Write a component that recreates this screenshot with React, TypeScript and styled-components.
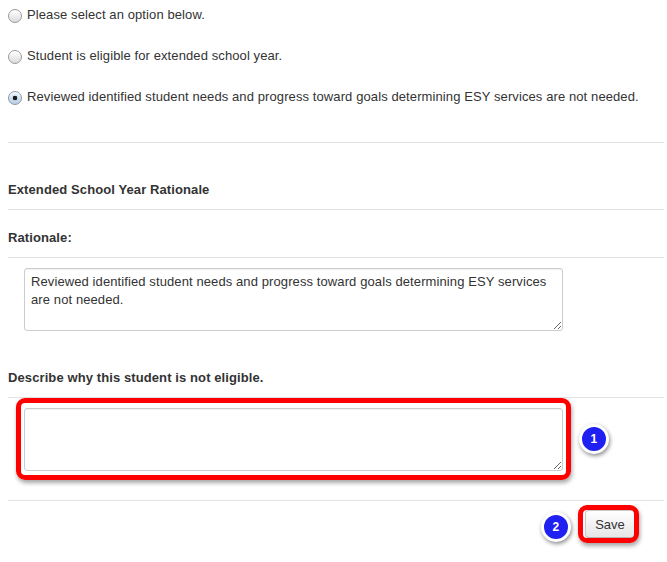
import React from "react";
import styled, { createGlobalStyle } from "styled-components";

const GlobalStyle = createGlobalStyle`
  html, body { margin: 0; padding: 0; background: #fff; }
  body {
    font-family: "Liberation Sans", Arial, Helvetica, sans-serif;
    font-size: 13px;
    letter-spacing: 0.1px;
    color: #333;
  }
`;

const Page = styled.div`
  width: 656px;
  padding-left: 8px;
  padding-bottom: 16px;
`;

const RadioList = styled.div`
  display: flex;
  flex-direction: column;
  gap: 23px;
  padding-top: 6px;
`;

const RadioRow = styled.label`
  display: flex;
  align-items: center;
  height: 18px;
  line-height: 18px;
  gap: 5px;
`;

const RadioDot = styled.span<{ $checked?: boolean }>`
  box-sizing: border-box;
  width: 14px;
  height: 14px;
  border-radius: 50%;
  border: 1px solid ${(p) => (p.$checked ? "#8a96a8" : "#9a9a9a")};
  background: ${(p) =>
    p.$checked
      ? "radial-gradient(circle at 50% 50%, #1a1a1a 0 2px, transparent 2.6px), linear-gradient(#eaf2fb, #b9cde6)"
      : "linear-gradient(#ffffff, #dcdcdc)"};
  box-shadow: inset 0 1px 1px rgba(255,255,255,0.8);
  flex-shrink: 0;
  margin-top: 1px;
`;

const Divider = styled.div<{ $top: number }>`
  height: 1px;
  background: #e3e3e3;
  margin-top: ${(p) => p.$top}px;
`;

const Heading = styled.div<{ $top: number }>`
  font-weight: bold;
  line-height: 18px;
  margin-top: ${(p) => p.$top}px;
  margin-bottom: 10px;
`;

const FieldWrap = styled.div<{ $top: number }>`
  position: relative;
  margin-top: ${(p) => p.$top}px;
  margin-left: 16px;
  width: 539px;
  height: 63px;
`;

const TextArea = styled.textarea`
  box-sizing: border-box;
  display: block;
  width: 539px;
  height: 63px;
  padding: 4px 6px;
  border: 1px solid #cccccc;
  border-radius: 3px;
  box-shadow: inset 0 1px 1px rgba(0,0,0,0.06);
  font-family: "Liberation Sans", Arial, Helvetica, sans-serif;
  font-size: 13px;
  letter-spacing: 0.1px;
  line-height: 18px;
  color: #333;
  background: #fff;
  resize: vertical;
  outline: none;
`;

const Highlight = styled.div<{ $t: number; $l: number; $r: number; $b: number }>`
  position: absolute;
  top: ${(p) => p.$t}px;
  left: ${(p) => p.$l}px;
  right: ${(p) => p.$r}px;
  bottom: ${(p) => p.$b}px;
  border: 5px solid #ff0000;
  border-radius: 9px;
  box-shadow: 1px 3px 4px rgba(0,0,0,0.35);
  pointer-events: none;
`;

const Badge = styled.div`
  position: absolute;
  box-sizing: border-box;
  width: 30px;
  height: 30px;
  border-radius: 50%;
  background: #2020f2;
  border: 3px solid #ffffff;
  box-shadow: 1px 2px 4px rgba(0,0,0,0.45);
  color: #fff;
  font-weight: bold;
  font-size: 12px;
  display: flex;
  align-items: center;
  justify-content: center;
`;

const Footer = styled.div`
  display: flex;
  justify-content: flex-end;
  align-items: center;
  padding-top: 9px;
  padding-right: 29px;
`;

const ButtonWrap = styled.div`
  position: relative;
  display: flex;
`;

const Button = styled.button`
  box-sizing: border-box;
  height: 28px;
  width: 50px;
  padding: 0;
  font-family: "Liberation Sans", Arial, Helvetica, sans-serif;
  font-size: 13px;
  color: #333;
  border: 1px solid #c8c8c8;
  border-bottom-color: #b3b3b3;
  border-radius: 4px;
  background: linear-gradient(#ffffff, #e6e6e6);
  box-shadow: inset 0 1px 0 rgba(255,255,255,0.2), 0 1px 2px rgba(0,0,0,0.05);
`;

export default function App() {
  return (
    <>
      <GlobalStyle />
      <Page>
        <RadioList>
          <RadioRow>
            <RadioDot />
            Please select an option below.
          </RadioRow>
          <RadioRow>
            <RadioDot />
            Student is eligible for extended school year.
          </RadioRow>
          <RadioRow>
            <RadioDot $checked />
            Reviewed identified student needs and progress toward goals determining ESY services are not needed.
          </RadioRow>
        </RadioList>

        <Divider $top={36} />
        <Heading $top={38}>Extended School Year Rationale</Heading>
        <Divider $top={0} />
        <Heading $top={19}>Rationale:</Heading>
        <Divider $top={0} />

        <FieldWrap $top={10}>
          <TextArea
            readOnly
            defaultValue="Reviewed identified student needs and progress toward goals determining ESY services are not needed."
          />
        </FieldWrap>

        <Heading $top={38}>Describe why this student is not eligible.</Heading>
        <Divider $top={0} />

        <FieldWrap $top={10}>
          <TextArea />
          <Highlight $t={-10} $l={-8} $r={-8} $b={-9} />
          <Badge style={{ left: 555, top: 16 }}>1</Badge>
        </FieldWrap>

        <Divider $top={29} />

        <Footer>
          <ButtonWrap>
            <Badge style={{ left: -44, top: 2 }}>2</Badge>
            <Button>Save</Button>
            <Highlight $t={-5} $l={-7} $r={-4} $b={-5} />
          </ButtonWrap>
        </Footer>
      </Page>
    </>
  );
}
